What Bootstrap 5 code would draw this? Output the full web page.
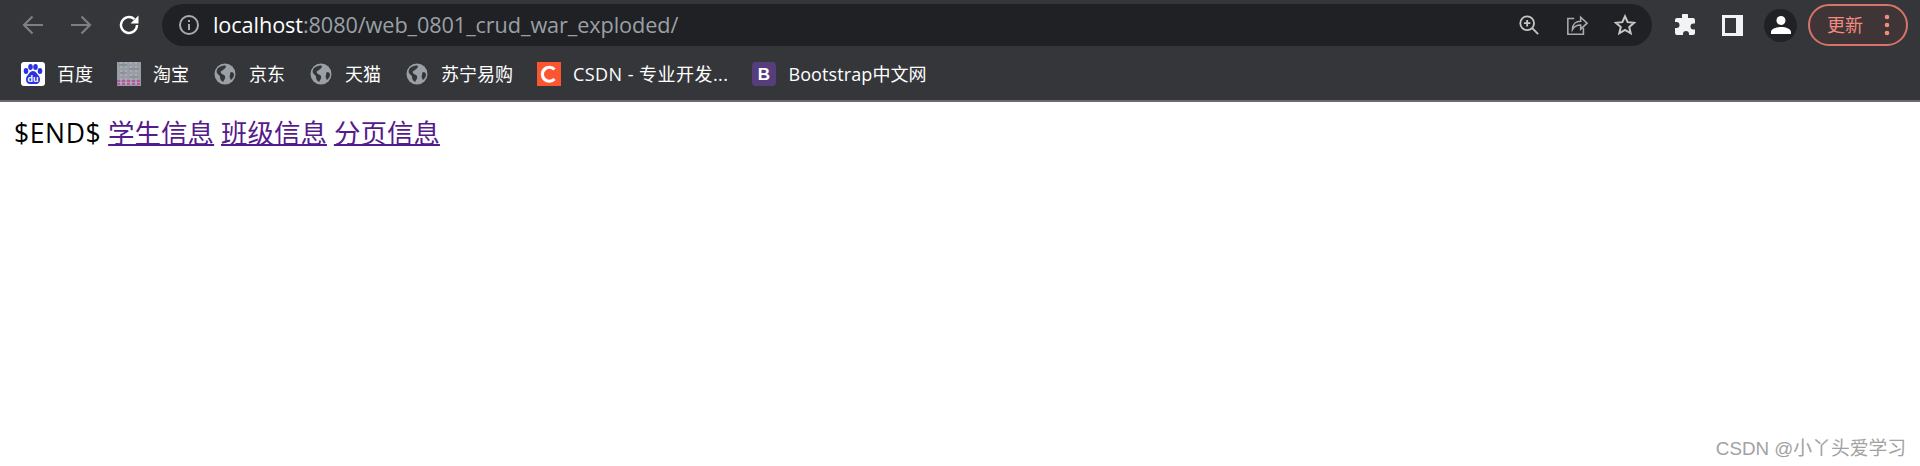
<!DOCTYPE html>
<html lang="zh">
<head>
    <meta charset="UTF-8">
    <meta name="viewport" content="width=device-width, initial-scale=1.0">
    <link href="https://cdn.jsdelivr.net/npm/bootstrap@5.3.3/dist/css/bootstrap.min.css" rel="stylesheet">
    <title>localhost</title>
    <style>
        html, body { height: 100%; }
        body { background: #fff; font-family: "Open Sans", "Noto Sans CJK SC", sans-serif; overflow: hidden; }
        .browser-top { background: #35363a; border-bottom: 2px solid #6b6c70; height: 102px; }
        .tool-row { height: 46px; padding-top: 4px; }
        .tool-btn { width: 48px; flex: none; }
        .nav-group { padding-left: 9px; width: 162px; height: 42px; flex: none; }
        .addr-bar { background: #202124; width: 1490px; height: 42px; border-radius: 21px; flex: none; padding-left: 16px; }
        .addr-text { font-size: 21.7px; color: #9aa0a6; margin-left: 13px; line-height: 42px; letter-spacing: -.1px; }
        .addr-text b { color: #fff; font-weight: 400; }
        .addr-icons { gap: 26px; padding-right: 16px; }
        .right-icons { height: 42px; padding-left: 22px; gap: 26px; flex: none; }
        .avatar-dot { width: 33px; height: 33px; background: #202124; border-radius: 50%; margin-left: -5px; flex: none; }
        .update-pill { width: 100px; height: 42px; margin-left: -15px; border: 2px solid #d8736b; border-radius: 21px; background: #3f3536; color: #f28b82; font-size: 18px; padding: 0 15px 0 17px; flex: none; }
        .bookmark-row { height: 54px; padding: 1px 0 0 21px; font-size: 18px; color: #fff; }
        .bm-item { margin-right: 24px; gap: 12px; white-space: nowrap; line-height: 24px; }
        .bm-ico { width: 24px; height: 24px; flex: none; display: block; }
        .bm-csdn { letter-spacing: .45px; }
        .bm-boot { letter-spacing: .1px; }
        .page-text { font-size: 26.5px; line-height: 36px; padding: 13px 0 0 14px; color: #000; }
        .page-text a { color: #551a8b; text-decoration-thickness: 2px; }
        .page-tag { letter-spacing: .6px; }
        .watermark { position: absolute; right: 14px; bottom: 3px; font-size: 18.8px; color: #a2a2a2; font-family: "Liberation Sans", "Noto Sans CJK SC", sans-serif; }
    </style>
</head>
<body>

<!--TOP OF THE BROWSER-->
<div class="browser-top">
  <div class="tool-row d-flex align-items-start">
    <div class="nav-group d-flex align-items-center">
      <div class="tool-btn d-flex justify-content-center">
        <svg width="24" height="24" viewBox="0 0 24 24" fill="none" stroke="#7d7f83" stroke-width="2.2"><path d="M22 12H3M11.5 3.5L3 12l8.5 8.5"/></svg>
      </div>
      <div class="tool-btn d-flex justify-content-center">
        <svg width="24" height="24" viewBox="0 0 24 24" fill="none" stroke="#7d7f83" stroke-width="2.2"><path d="M2 12h19M12.5 3.5L21 12l-8.500 8.500"/></svg>
      </div>
      <div class="tool-btn d-flex justify-content-center">
        <svg width="24" height="24" viewBox="0 0 24 24" fill="none"><path d="M20 12a8 8 0 1 1-2.600-5.900" stroke="#fff" stroke-width="2.4"/><path d="M21.5 2.500v8h-8z" fill="#fff"/></svg>
      </div>
    </div>

    <div class="addr-bar d-flex align-items-center justify-content-between">
      <div class="d-flex align-items-center">
        <svg width="22" height="22" viewBox="0 0 22 22" fill="none"><circle cx="11" cy="11" r="9" stroke="#a8abaf" stroke-width="2"/><path d="M11 10v6M11 6v2" stroke="#a8abaf" stroke-width="2"/></svg>
        <span class="addr-text"><b>localhost</b>:8080/web_0801_crud_war_exploded/</span>
      </div>
      <div class="addr-icons d-flex align-items-center">
        <svg width="22" height="22" viewBox="0 0 24 24" fill="none" stroke="#c4c7c5" stroke-width="2"><circle cx="10" cy="10" r="7.5"/><path d="M15.5 15.5L22 22M6.500 10h7M10 6.500v7"/></svg>
        <svg width="22" height="22" viewBox="0 0 24 24" fill="none" stroke="#a8abaf" stroke-width="1.7"><path d="M9 5H2v17h17v-7"/><path d="M7 17c0-6 4-9 9-9V3.500l7 6.500-7 6.500V12c-4 0-7 1.500-9 5z"/></svg>
        <svg width="22" height="22" viewBox="0 0 24 24" fill="none" stroke="#c4c7c5" stroke-width="2.2"><path d="M12 2.500l2.900 6.400 7 .7-5.300 4.600 1.600 6.800L12 17.400 5.800 21l1.600-6.800L2.100 9.600l7-.7z"/></svg>
      </div>
    </div>

    <div class="right-icons d-flex align-items-center">
      <svg width="22" height="22" viewBox="0 0 22 22" fill="#f1f3f4"><path d="M8 1.500a3 3 0 0 1 6 0V4h5a2 2 0 0 1 2 2v3.500h-1.500a3 3 0 0 0 0 6H21V19a2 2 0 0 1-2 2h-4v-1a3 3 0 0 0-6 0v1H3a2 2 0 0 1-2-2v-5h1.500a3 3 0 0 0 0-6H1V6a2 2 0 0 1 2-2h5z"/></svg>
      <svg width="21" height="21" viewBox="0 0 21 21"><path fill="#f1f3f4" d="M0 0h21v21H0z"/><path fill="#35363a" d="M3 3h11v15H3z"/></svg>
      <div class="avatar-dot d-flex align-items-center justify-content-center">
        <svg width="20" height="20" viewBox="0 0 20 20" fill="#fff"><circle cx="10" cy="5.500" r="4.500"/><path d="M0 19v-2c0-3 5-5 10-5s10 2 10 5v2z"/></svg>
      </div>
      <div class="update-pill d-flex align-items-center justify-content-between">
        <span>更新</span>
        <svg width="8" height="22" viewBox="0 0 8 22" fill="#f28b82"><circle cx="4" cy="3" r="2.300"/><circle cx="4" cy="11" r="2.300"/><circle cx="4" cy="19" r="2.300"/></svg>
      </div>
    </div>
  </div>

  <!--BOOKMARKS-->
  <div class="bookmark-row d-flex align-items-center">
    <div class="bm-item d-flex align-items-center">
      <svg class="bm-ico" viewBox="0 0 24 24"><rect width="24" height="24" rx="3" fill="#fff"/><g fill="#2932e1"><ellipse cx="5" cy="9" rx="2.300" ry="3"/><ellipse cx="9.500" cy="5" rx="2.300" ry="3"/><ellipse cx="14.500" cy="5" rx="2.300" ry="3"/><ellipse cx="19" cy="9" rx="2.300" ry="3"/><path d="M12 9c3 0 4 3 6 5 2 3 1 8-3 8H9c-4 0-5-5-3-8 2-2 3-5 6-5z"/></g><text x="12" y="20" font-size="9" font-weight="700" text-anchor="middle" fill="#fff" font-family="Liberation Sans">du</text></svg>
      <span>百度</span>
    </div>
    <div class="bm-item d-flex align-items-center">
      <svg class="bm-ico" viewBox="0 0 24 24"><rect width="24" height="24" fill="#9c9ca4"/><path d="M2 2h8v2H2zM12 6h10v2H12zM3 10h6v2H3zM13 14h8v2h-8z" fill="#7f9a8c"/><path d="M4 0v24M9 0v24M14 0v24M19 0v24" stroke="#b9a9c9" stroke-width="1.5" stroke-dasharray="2 2"/><path d="M0 19h24M0 22h24" stroke="#c2409a" stroke-width="1.5" stroke-dasharray="3 2"/></svg>
      <span>淘宝</span>
    </div>
    <div class="bm-item d-flex align-items-center">
      <svg class="bm-ico" viewBox="0 0 24 24"><circle cx="12" cy="12" r="10.500" fill="#9aa0a6"/><path d="M5 6c3-2 6-3 8-2 0 2-2 3-3 4s-3 1-2 3 3 1 4 3-1 4-2 6c-2-1-3-3-3-5s-2-2-3-4 0-3 1-5zM18 10c2 0 3 1 3 3s-2 4-3 5c-1-2-2-3-1-5 0-1 0-2 1-3z" fill="#35363a"/></svg>
      <span>京东</span>
    </div>
    <div class="bm-item d-flex align-items-center">
      <svg class="bm-ico" viewBox="0 0 24 24"><circle cx="12" cy="12" r="10.500" fill="#9aa0a6"/><path d="M5 6c3-2 6-3 8-2 0 2-2 3-3 4s-3 1-2 3 3 1 4 3-1 4-2 6c-2-1-3-3-3-5s-2-2-3-4 0-3 1-5zM18 10c2 0 3 1 3 3s-2 4-3 5c-1-2-2-3-1-5 0-1 0-2 1-3z" fill="#35363a"/></svg>
      <span>天猫</span>
    </div>
    <div class="bm-item d-flex align-items-center">
      <svg class="bm-ico" viewBox="0 0 24 24"><circle cx="12" cy="12" r="10.500" fill="#9aa0a6"/><path d="M5 6c3-2 6-3 8-2 0 2-2 3-3 4s-3 1-2 3 3 1 4 3-1 4-2 6c-2-1-3-3-3-5s-2-2-3-4 0-3 1-5zM18 10c2 0 3 1 3 3s-2 4-3 5c-1-2-2-3-1-5 0-1 0-2 1-3z" fill="#35363a"/></svg>
      <span>苏宁易购</span>
    </div>
    <div class="bm-item d-flex align-items-center">
      <svg class="bm-ico" viewBox="0 0 24 24"><rect width="24" height="24" fill="#fc5531"/><path d="M17.5 7.500A7 7 0 1 0 17.5 17" fill="none" stroke="#fff" stroke-width="3.2"/></svg>
      <span class="bm-csdn">CSDN - 专业开发...</span>
    </div>
    <div class="bm-item d-flex align-items-center">
      <svg class="bm-ico" viewBox="0 0 24 24"><rect width="24" height="24" rx="4" fill="#563d7c"/><text x="12" y="18" font-size="17" font-weight="700" text-anchor="middle" fill="#fff" font-family="Liberation Sans">B</text></svg>
      <span class="bm-boot">Bootstrap中文网</span>
    </div>
  </div>
</div>

<!--PAGE-->
<div class="page-text"><span class="page-tag">$END$</span> <a href="#">学生信息</a> <a href="#">班级信息</a> <a href="#">分页信息</a></div>

<div class="watermark">CSDN @小丫头爱学习</div>

<script src="https://cdn.jsdelivr.net/npm/bootstrap@5.3.3/dist/js/bootstrap.bundle.min.js"></script>
</body>
</html>
